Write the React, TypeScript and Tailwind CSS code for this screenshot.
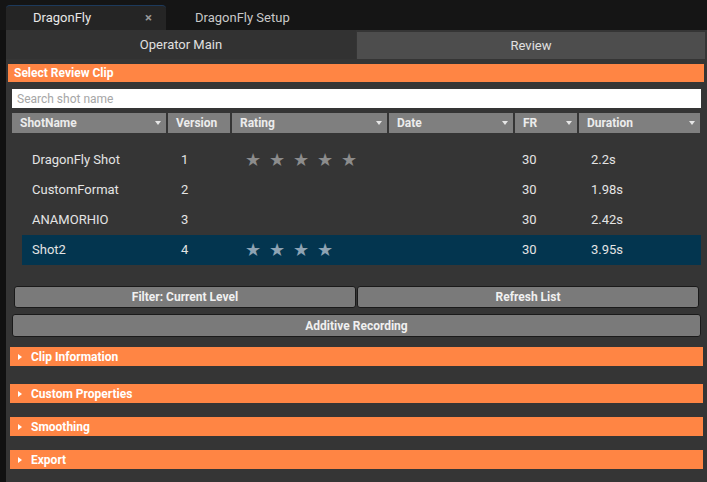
import { useState } from "react";

type Clip = {
  name: string;
  version: number;
  rating: number;
  fr: number;
  duration: string;
};

const clips: Clip[] = [
  { name: "DragonFly Shot", version: 1, rating: 5, fr: 30, duration: "2.2s" },
  { name: "CustomFormat", version: 2, rating: 0, fr: 30, duration: "1.98s" },
  { name: "ANAMORHIO", version: 3, rating: 0, fr: 30, duration: "2.42s" },
  { name: "Shot2", version: 4, rating: 4, fr: 30, duration: "3.95s" },
];

const columns = [
  { label: "ShotName", w: "w-[154px]", arrow: true },
  { label: "Version", w: "w-[62px]", arrow: false },
  { label: "Rating", w: "w-[155px]", arrow: true },
  { label: "Date", w: "w-[124px]", arrow: true },
  { label: "FR", w: "w-[62px]", arrow: true },
  { label: "Duration", w: "flex-1", arrow: true },
];

const sections = ["Clip Information", "Custom Properties", "Smoothing", "Export"];

function Arrow() {
  return (
    <svg width="6" height="4" viewBox="0 0 6 4" className="shrink-0">
      <path d="M0 0h6L3 4z" fill="#e6e6e6" />
    </svg>
  );
}

function Section({ title, top }: { title: string; top: string }) {
  return (
    <div
      className={`${top} mx-[4px] h-[19px] bg-[#ff8544] flex items-center text-[12px] font-bold text-white`}
    >
      <svg width="4" height="6" viewBox="0 0 4 6" className="ml-[8px] mr-[9px]">
        <path d="M0 0l4 3-4 3z" fill="#fff" />
      </svg>
      {title}
    </div>
  );
}

export default function App() {
  const [selected, setSelected] = useState(3);
  const [tab, setTab] = useState("main");

  return (
    <div
      className="w-[707px] h-[482px] bg-[#151515] flex flex-col overflow-hidden"
      style={{ fontFamily: "Roboto, 'Noto Sans', sans-serif" }}
    >
      {/* window tabs */}
      <div className="h-[30px] shrink-0 flex items-end pl-[6px]">
        <div className="w-[160px] h-[25px] bg-[#252525] rounded-t-[4px] border-t border-[#1d3a5c] flex items-center pl-[27px] pr-[14px] text-[13px] text-[#e8e8e8]">
          <span>DragonFly</span>
          <span className="ml-auto text-[13px] text-[#9a9a9a] font-bold">×</span>
        </div>
        <div className="h-[25px] flex items-center pl-[29px] text-[13px] text-[#c8c8c8]">
          DragonFly Setup
        </div>
      </div>

      <div className="flex-1 flex">
        <div className="w-[6px] bg-[#111111]" />
        <div className="flex-1 bg-[#353535] flex flex-col">
          {/* sub tabs */}
          <div className="h-[32px] flex">
            <button
              onClick={() => setTab("main")}
              className={`w-[350px] h-[29px] text-[13px] text-[#e0e0e0] ${
                tab === "main" ? "bg-[#323232]" : "bg-[#4d4d4d]"
              }`}
            >
              Operator Main
            </button>
            <button
              onClick={() => setTab("review")}
              className={`ml-[1px] mt-[2px] w-[348px] h-[27px] text-[13px] text-[#e0e0e0] ${
                tab === "review" ? "bg-[#323232]" : "bg-[#4d4d4d]"
              }`}
            >
              Review
            </button>
          </div>

          <div className="mt-[2px] ml-[2px] mr-[3px] h-[18px] bg-[#ff8544] flex items-center pl-[6px] text-[12px] font-bold text-white">
            Select Review Clip
          </div>

          <input
            placeholder="Search shot name"
            className="mt-[7px] ml-[6px] mr-[6px] h-[19px] bg-white px-[5px] text-[12px] text-[#333] placeholder:text-[#a6a6a6] outline-none"
          />

          {/* table header */}
          <div className="mt-[5px] ml-[6px] mr-[7px] h-[20px] flex gap-[2px]">
            {columns.map((c) => (
              <div
                key={c.label}
                className={`${c.w} bg-[#7f7f7f] flex items-center pl-[8px] pr-[5px] text-[12px] font-bold text-[#ececec]`}
              >
                <span className="flex-1">{c.label}</span>
                {c.arrow && <Arrow />}
              </div>
            ))}
          </div>

          {/* rows */}
          <div className="mt-[12px] ml-[16px] mr-[6px] flex flex-col">
            {clips.map((c, i) => (
              <div
                key={c.name}
                onClick={() => setSelected(i)}
                className={`h-[30px] flex items-center text-[13px] text-[#e4e4e4] ${
                  selected === i ? "bg-[#03354f]" : ""
                }`}
              >
                <span className="w-[159px] pl-[10px]">{c.name}</span>
                <span className="w-[64px]">{c.version}</span>
                <span className="w-[277px] flex gap-[6px] text-[18px] leading-none">
                  {Array.from({ length: c.rating }).map((_, k) => (
                    <span
                      key={k}
                      className={`w-[18px] ${selected === i ? "text-[#8ea3b3]" : "text-[#8c8c8c]"}`}
                    >
                      ★
                    </span>
                  ))}
                </span>
                <span className="w-[69px]">{c.fr}</span>
                <span>{c.duration}</span>
              </div>
            ))}
          </div>

          {/* buttons */}
          <div className="mt-[21px] ml-[8px] mr-[8px] flex gap-[1px]">
            <button className="flex-1 h-[22px] bg-[#7a7a7a] border border-[#1a1a1a] rounded-[3px] text-[12px] font-bold text-[#f0f0f0]">
              Filter: Current Level
            </button>
            <button className="flex-1 h-[22px] bg-[#7a7a7a] border border-[#1a1a1a] rounded-[3px] text-[12px] font-bold text-[#f0f0f0]">
              Refresh List
            </button>
          </div>
          <button className="mt-[6px] ml-[6px] mr-[6px] h-[23px] bg-[#7a7a7a] border border-[#1a1a1a] rounded-[3px] text-[12px] font-bold text-[#f0f0f0]">
            Additive Recording
          </button>

          <Section title={sections[0]} top="mt-[10px]" />
          <Section title={sections[1]} top="mt-[18px]" />
          <Section title={sections[2]} top="mt-[14px]" />
          <Section title={sections[3]} top="mt-[14px]" />
        </div>
      </div>
    </div>
  );
}
